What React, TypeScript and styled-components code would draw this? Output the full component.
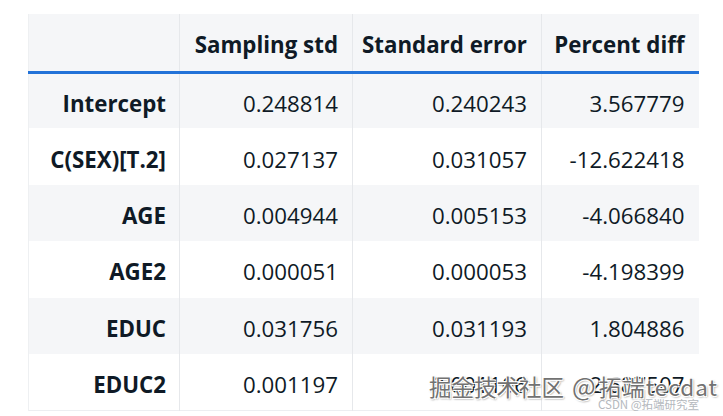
import React from 'react'
import styled, { createGlobalStyle } from 'styled-components'

const GlobalStyle = createGlobalStyle`
    html, body {
        margin: 0;
        padding: 0;
        background: #fff;
    }
`;

const Page = styled.div`
    position: relative;
    width: 723px;
    height: 416px;
    overflow: hidden;
    padding: 14px 0 0 28px;
    box-sizing: border-box;
    font-family: "Open Sans", "Noto Sans", sans-serif;
    color: #0f1a26;
`;

const Table = styled.table`
    border-collapse: collapse;
    table-layout: fixed;
    width: 670px;
    font-size: 22.3px;
`;

const HeadRow = styled.tr`
    background: #f5f6f8;
    height: 58px;
    border-bottom: 3px solid #2272d8;
`;

const HeadCell = styled.th`
    font-weight: 700;
    font-size: 22.3px;
    text-align: right;
    padding: 4px 14px 0 0;
    white-space: nowrap;
    border-left: 1px solid #e6e8eb;
    &:first-child {
        border-left: 1px solid #eef0f2;
    }
`;

const Row = styled.tr<{ $striped: boolean }>`
    height: 56.4px;
    background: ${props => props.$striped ? "#f5f6f8" : "#fff"};
`;

const LabelCell = styled.th`
    font-weight: 700;
    text-align: right;
    padding: 5px 13px 0 0;
    white-space: nowrap;
    border-left: 1px solid #eef0f2;
    border-right: 1px solid #e6e8eb;
`;

const Cell = styled.td`
    font-weight: 400;
    text-align: right;
    padding: 5px 14px 0 0;
    white-space: nowrap;
    border-right: 1px solid #e6e8eb;
    &:last-child {
        border-right: none;
    }
`;

const LastRow = styled(Row)`
    border-bottom: 1px solid #eceef1;
`;

const Watermark = styled.div`
    position: absolute;
    left: 429px;
    top: 367px;
    font-family: "Noto Sans CJK SC", "Open Sans", sans-serif;
    font-size: 22.5px;
    color: #727272;
    white-space: nowrap;
    text-shadow: 1px 1px 0 #fff, -1px -1px 0 #fff, 1px -1px 0 #fff, -1px 1px 0 #fff, 1px 1px 2px #555;

    span {
        font-size: 25px;
        margin: 0 3px 0 8px;
    }

    b {
        font-weight: 400;
        letter-spacing: 1px;
    }
`;

const SmallMark = styled.div`
    position: absolute;
    left: 598px;
    top: 396px;
    font-family: "Noto Sans CJK SC", "Open Sans", sans-serif;
    font-size: 11.5px;
    color: #b4b8bd;
    white-space: nowrap;
`;

const cols = [151, 173, 189, 157];

const rows = [
    ["Intercept", "0.248814", "0.240243", "3.567779"],
    ["C(SEX)[T.2]", "0.027137", "0.031057", "-12.622418"],
    ["AGE", "0.004944", "0.005153", "-4.066840"],
    ["AGE2", "0.000051", "0.000053", "-4.198399"],
    ["EDUC", "0.031756", "0.031193", "1.804886"],
    ["EDUC2", "0.001197", "0.001166", "2.687507"],
];

function App() {
    return (
        <Page>
            <GlobalStyle />
            <Table>
                <colgroup>
                    {cols.map((w, i) => <col key={i} style={{ width: w }} />)}
                </colgroup>
                <thead>
                    <HeadRow>
                        <HeadCell></HeadCell>
                        <HeadCell>Sampling std</HeadCell>
                        <HeadCell>Standard error</HeadCell>
                        <HeadCell>Percent diff</HeadCell>
                    </HeadRow>
                </thead>
                <tbody>
                    {rows.map((r, i) => {
                        const R = i === rows.length - 1 ? LastRow : Row;
                        return (
                            <R key={r[0]} $striped={i % 2 === 0}>
                                <LabelCell>{r[0]}</LabelCell>
                                <Cell>{r[1]}</Cell>
                                <Cell>{r[2]}</Cell>
                                <Cell>{r[3]}</Cell>
                            </R>
                        );
                    })}
                </tbody>
            </Table>
            <Watermark>掘金技术社区<span>@</span><b>拓端tecdat</b></Watermark>
            <SmallMark>CSDN @拓端研究室</SmallMark>
        </Page>
    )
}

export default App
